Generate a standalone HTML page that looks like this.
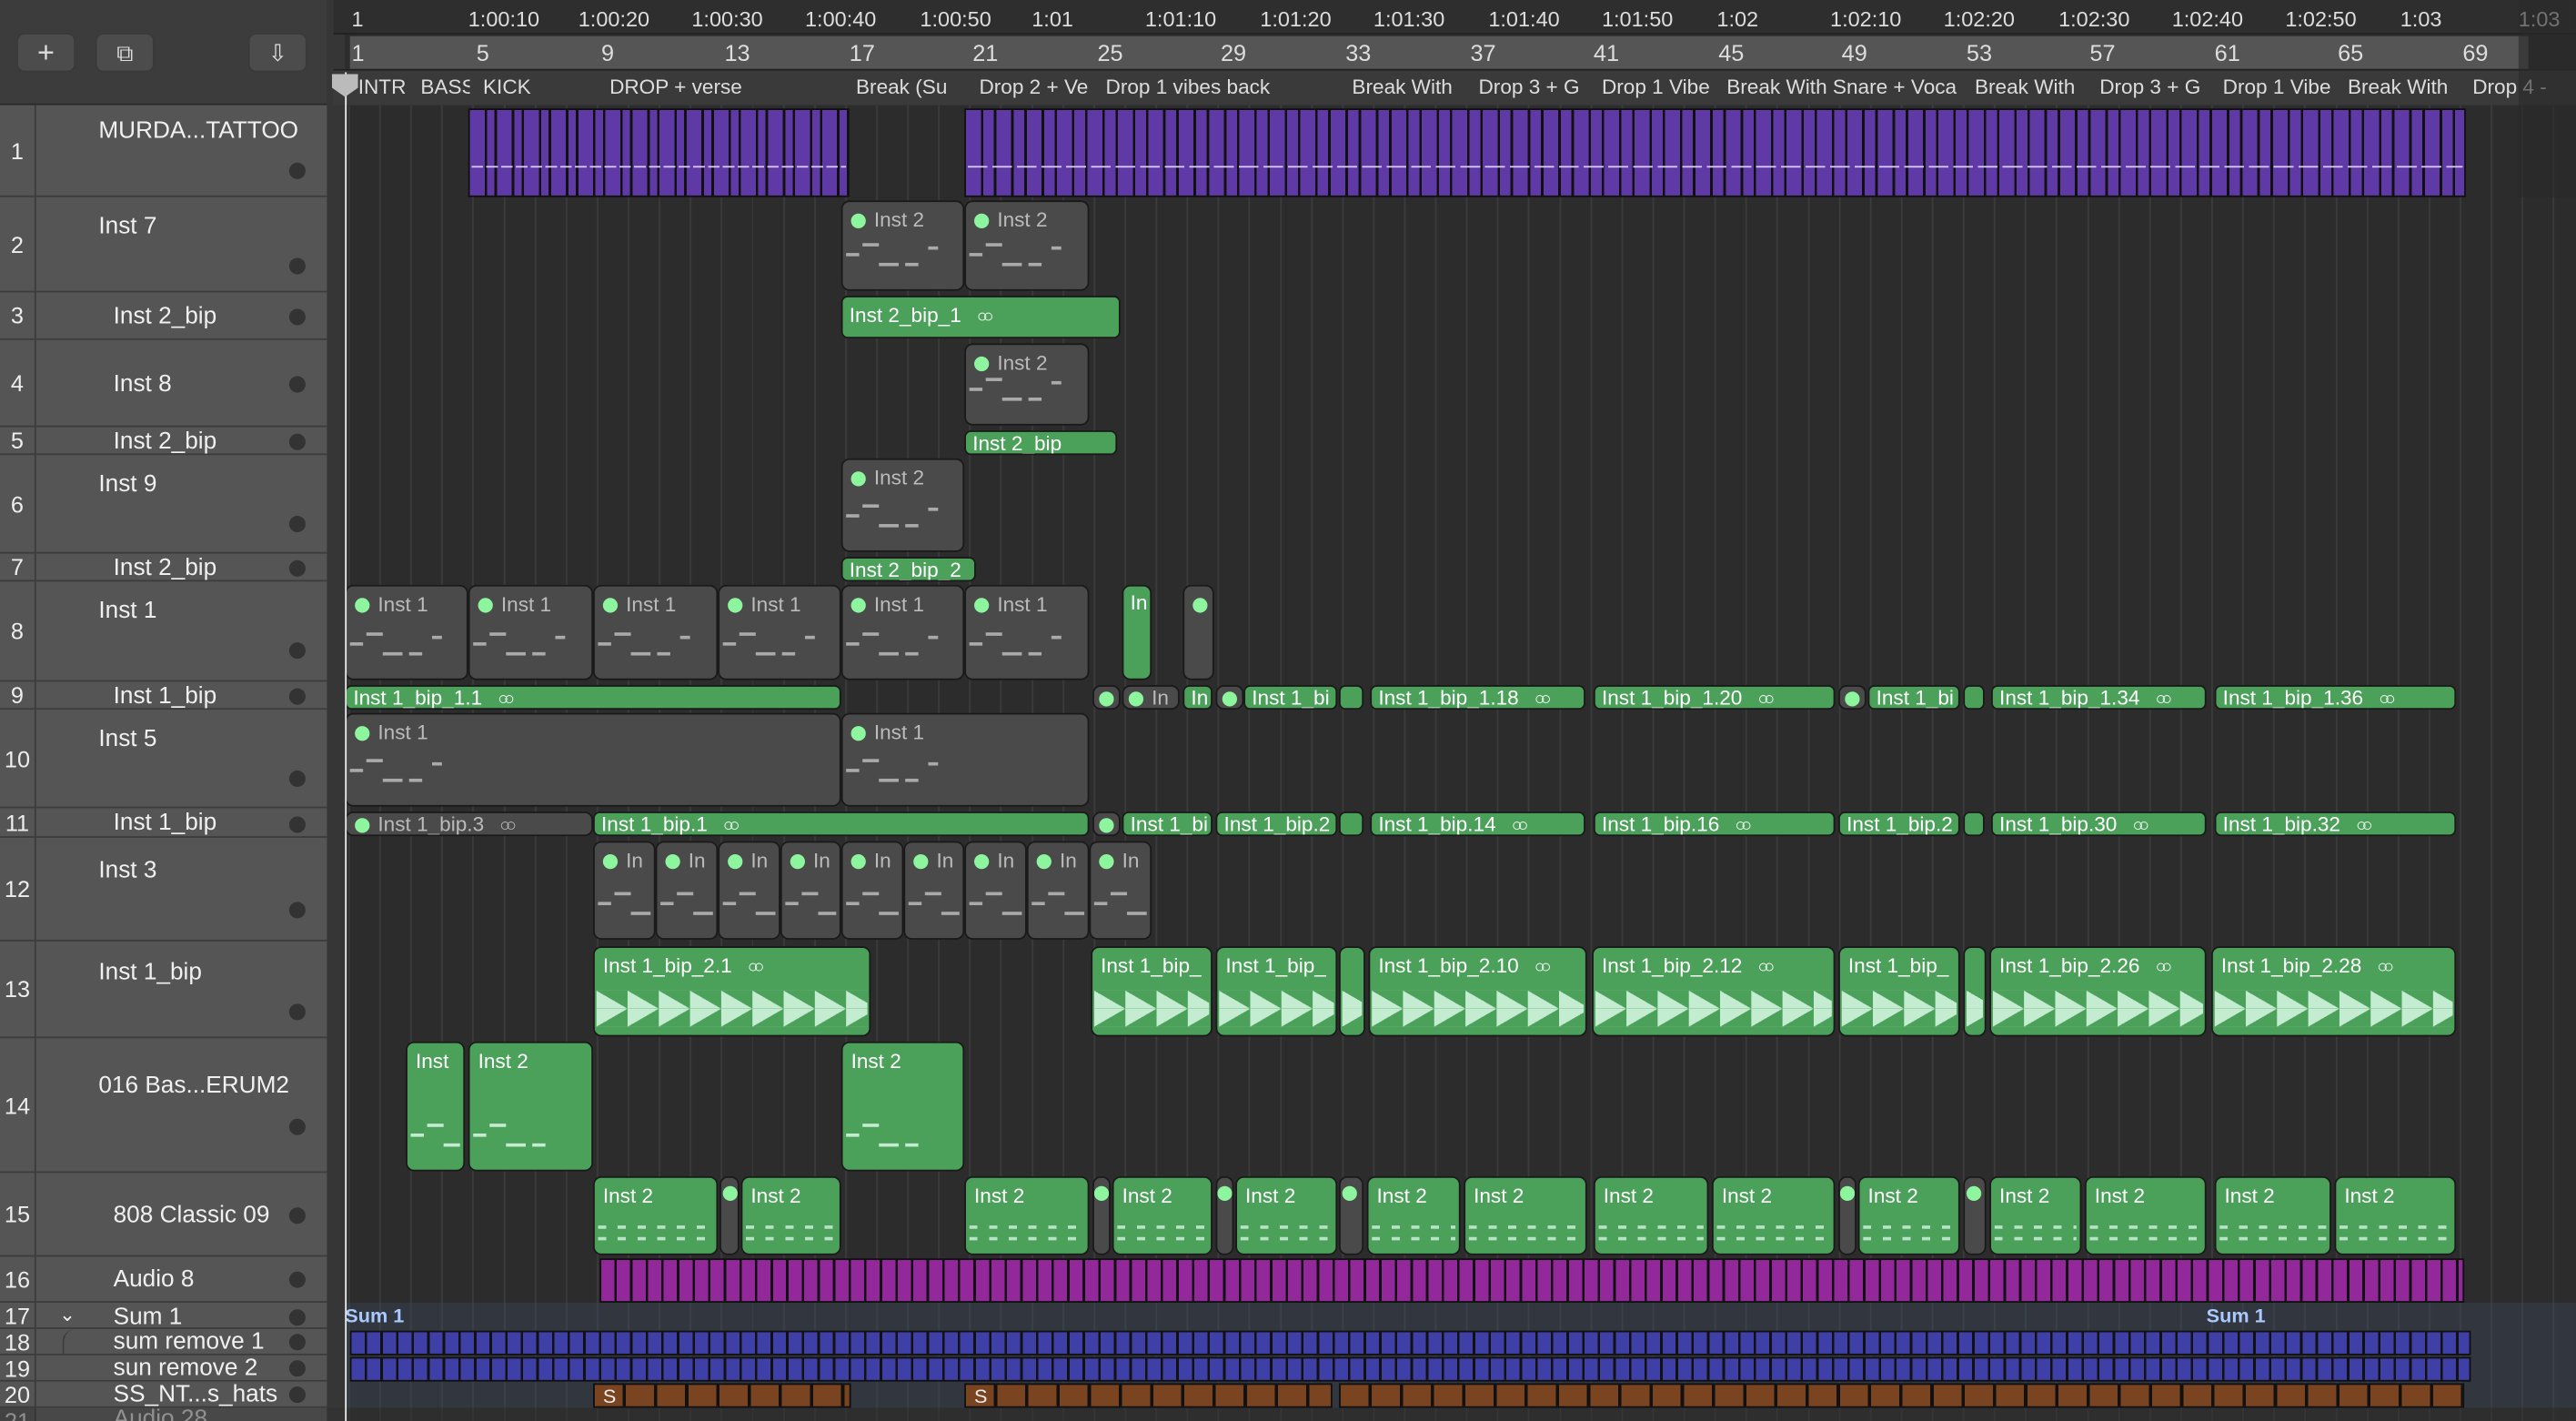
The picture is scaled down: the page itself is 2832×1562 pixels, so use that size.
<!DOCTYPE html>
<html><head><meta charset="utf-8"><style>
*{margin:0;padding:0;box-sizing:border-box}
html,body{width:2832px;height:1562px;overflow:hidden;background:#2c2c2c}
#w{position:absolute;left:0;top:0;width:1568px;height:865px;transform:scale(1.80612,1.8058);transform-origin:0 0;font-family:"Liberation Sans",sans-serif;color:#eee;overflow:hidden;background:#2c2c2c}
.a{position:absolute}
.tl{position:absolute;left:22px;width:177px;background:#555;border-bottom:1px solid #3c3c3c}
.tn{position:absolute;left:0;width:22px;background:#555;border-bottom:1px solid #3c3c3c;border-right:1px solid #3c3c3c;font-size:14px;text-align:center;color:#eee}
.nm{position:absolute;font-size:14.5px;color:#f0f0f0;white-space:nowrap}
.dot{position:absolute;left:176px;width:10px;height:10px;border-radius:50%;background:#333}
.g{position:absolute;background:#4ba05a;border:1px solid #1a1a1a;border-radius:4px;font-size:12.5px;color:#fff;padding-left:4px;white-space:nowrap;overflow:hidden;line-height:14px}
.m{position:absolute;background:#4a4a4a;border:1px solid #1a1a1a;border-radius:5px;font-size:12.5px;color:#bbb;white-space:nowrap;overflow:hidden;padding:4px 0 0 5px}
.m::before{content:"";display:inline-block;width:9px;height:9px;border-radius:50%;background:#8ef59f;margin-right:5px;vertical-align:-1px}
.m.e::before{display:none}
.mg{position:absolute;background:#4ba05a;border:1px solid #1a1a1a;border-radius:5px;font-size:12.5px;color:#fff;white-space:nowrap;overflow:hidden;padding:4px 0 0 5px}
.rl{position:absolute;font-size:13px;color:#ddd;white-space:nowrap}
.mk{position:absolute;top:46px;font-size:12.5px;color:#ddd;white-space:nowrap}
.btn{position:absolute;top:20px;height:24px;width:36px;background:#4c4c4c;border:1px solid #3a3a3a;border-radius:5px;color:#ddd;text-align:center;font-size:18px;line-height:22px}
.lnk{font-size:11px;margin-left:6px;letter-spacing:-3px}
.notes{position:absolute;left:2px;right:2px;bottom:8px;height:26px;background-image:linear-gradient(#aaa,#aaa),linear-gradient(#aaa,#aaa),linear-gradient(#aaa,#aaa),linear-gradient(#aaa,#aaa),linear-gradient(#aaa,#aaa);background-size:8px 2px,10px 2px,12px 2px,8px 2px,6px 2px;background-position:0 12px,10px 6px,20px 18px,36px 18px,50px 8px;background-repeat:no-repeat}
.mg .notes{background-image:linear-gradient(#c3ecd0,#c3ecd0),linear-gradient(#c3ecd0,#c3ecd0),linear-gradient(#c3ecd0,#c3ecd0),linear-gradient(#c3ecd0,#c3ecd0)}
.wv{position:absolute;left:1px;right:1px;top:26px;height:22px;background:linear-gradient(to top right,#c3ecd0 50%,transparent 50%) 0 0/19px 11px repeat-x,linear-gradient(to bottom right,#c3ecd0 50%,transparent 50%) 0 11px/19px 11px repeat-x}
.nt{position:absolute;left:2px;right:2px;bottom:6px;height:14px;background:linear-gradient(#c3ecd0,#c3ecd0) 0 2px/5px 2px,linear-gradient(#c3ecd0,#c3ecd0) 0 8px/5px 2px;background-repeat:repeat-x;background-size:5px 2px;background-position:3px 3px,8px 10px;opacity:.9;-webkit-mask:repeating-linear-gradient(to right,#000 0 5px,transparent 5px 12px)}
</style></head><body><div id="w">
<div class="a" style="left:210px;top:64px;width:1358px;height:801px;background-image:repeating-linear-gradient(to right,#3b3b3b 0 1px,transparent 1px 18.9px);background-position:2px 0"></div>
<div class="a" style="left:0;top:0;width:200px;height:64px;background:#3c3c3c;border-bottom:1px solid #2a2a2a"></div>
<div class="btn" style="left:10px">+</div>
<div class="btn" style="left:58px;font-size:14px">⧉</div>
<div class="btn" style="left:151px;font-size:14px">⇩</div>
<div class="a" style="left:199px;top:0;width:11px;height:865px;background:#363636"></div>
<div class="a" style="left:203px;top:0;width:1365px;height:21px;background:#2e2e2e;border-bottom:1px solid #222"></div>
<div class="a" style="left:213px;top:22px;width:1326px;height:20px;background:#555"></div>
<div class="a" style="left:203px;top:42px;width:1365px;height:22px;background:#3a3a3a;border-top:1px solid #222"></div>
<div class="rl" style="left:214px;top:4px">1</div><div class="rl" style="left:285px;top:4px">1:00:10</div><div class="rl" style="left:352px;top:4px">1:00:20</div><div class="rl" style="left:421px;top:4px">1:00:30</div><div class="rl" style="left:490px;top:4px">1:00:40</div><div class="rl" style="left:560px;top:4px">1:00:50</div><div class="rl" style="left:628px;top:4px">1:01</div><div class="rl" style="left:697px;top:4px">1:01:10</div><div class="rl" style="left:767px;top:4px">1:01:20</div><div class="rl" style="left:836px;top:4px">1:01:30</div><div class="rl" style="left:906px;top:4px">1:01:40</div><div class="rl" style="left:975px;top:4px">1:01:50</div><div class="rl" style="left:1045px;top:4px">1:02</div><div class="rl" style="left:1114px;top:4px">1:02:10</div><div class="rl" style="left:1183px;top:4px">1:02:20</div><div class="rl" style="left:1253px;top:4px">1:02:30</div><div class="rl" style="left:1322px;top:4px">1:02:40</div><div class="rl" style="left:1391px;top:4px">1:02:50</div><div class="rl" style="left:1461px;top:4px">1:03</div><div class="rl" style="left:1533px;top:4px">1:03</div>
<div class="rl" style="left:214px;top:24px;font-size:14px">1</div><div class="rl" style="left:290px;top:24px;font-size:14px">5</div><div class="rl" style="left:366px;top:24px;font-size:14px">9</div><div class="rl" style="left:441px;top:24px;font-size:14px">13</div><div class="rl" style="left:517px;top:24px;font-size:14px">17</div><div class="rl" style="left:592px;top:24px;font-size:14px">21</div><div class="rl" style="left:668px;top:24px;font-size:14px">25</div><div class="rl" style="left:743px;top:24px;font-size:14px">29</div><div class="rl" style="left:819px;top:24px;font-size:14px">33</div><div class="rl" style="left:895px;top:24px;font-size:14px">37</div><div class="rl" style="left:970px;top:24px;font-size:14px">41</div><div class="rl" style="left:1046px;top:24px;font-size:14px">45</div><div class="rl" style="left:1121px;top:24px;font-size:14px">49</div><div class="rl" style="left:1197px;top:24px;font-size:14px">53</div><div class="rl" style="left:1272px;top:24px;font-size:14px">57</div><div class="rl" style="left:1348px;top:24px;font-size:14px">61</div><div class="rl" style="left:1423px;top:24px;font-size:14px">65</div><div class="rl" style="left:1499px;top:24px;font-size:14px">69</div>
<div class="mk" style="left:218px">INTR</div><div class="mk" style="left:256px;width:30px;overflow:hidden">BASS</div><div class="mk" style="left:294px">KICK</div><div class="mk" style="left:371px">DROP + verse</div><div class="mk" style="left:521px;width:60px;overflow:hidden">Break (Su</div><div class="mk" style="left:596px;width:70px;overflow:hidden">Drop 2 + Ve</div><div class="mk" style="left:673px">Drop 1 vibes back</div><div class="mk" style="left:823px">Break With</div><div class="mk" style="left:900px;width:66px;overflow:hidden">Drop 3 + G</div><div class="mk" style="left:975px;width:70px;overflow:hidden">Drop 1 Vibe</div><div class="mk" style="left:1051px;width:145px;overflow:hidden">Break With Snare + Voca</div><div class="mk" style="left:1202px">Break With</div><div class="mk" style="left:1278px;width:66px;overflow:hidden">Drop 3 + G</div><div class="mk" style="left:1353px;width:70px;overflow:hidden">Drop 1 Vibe</div><div class="mk" style="left:1429px">Break With</div><div class="mk" style="left:1505px">Drop 4 -</div>
<div class="a" style="left:1533px;top:0;width:35px;height:120px;background:#2a2a2a;opacity:.6"></div>

<div class="tn" style="top:64px;height:56px;line-height:56px">1</div><div class="tl" style="top:64px;height:56px"></div><div class="nm" style="left:60px;top:72px">MURDA...TATTOO</div><div class="dot" style="top:99px"></div>
<div class="tn" style="top:120px;height:58px;line-height:58px">2</div><div class="tl" style="top:120px;height:58px"></div><div class="nm" style="left:60px;top:130px">Inst 7</div><div class="dot" style="top:157px"></div>
<div class="tn" style="top:178px;height:29px;line-height:29px">3</div><div class="tl" style="top:178px;height:29px"></div><div class="nm" style="left:69px;top:185px">Inst 2_bip</div><div class="dot" style="top:188px"></div>
<div class="tn" style="top:207px;height:53px;line-height:53px">4</div><div class="tl" style="top:207px;height:53px"></div><div class="nm" style="left:69px;top:226px">Inst 8</div><div class="dot" style="top:229px"></div>
<div class="tn" style="top:260px;height:17px;line-height:17px">5</div><div class="tl" style="top:260px;height:17px;overflow:hidden"></div><div class="nm" style="left:69px;top:261px">Inst 2_bip</div><div class="dot" style="top:264px"></div>
<div class="tn" style="top:277px;height:60px;line-height:60px">6</div><div class="tl" style="top:277px;height:60px"></div><div class="nm" style="left:60px;top:287px">Inst 9</div><div class="dot" style="top:314px"></div>
<div class="tn" style="top:337px;height:17px;line-height:17px">7</div><div class="tl" style="top:337px;height:17px"></div><div class="nm" style="left:69px;top:338px">Inst 2_bip</div><div class="dot" style="top:341px"></div>
<div class="tn" style="top:354px;height:61px;line-height:61px">8</div><div class="tl" style="top:354px;height:61px"></div><div class="nm" style="left:60px;top:364px">Inst 1</div><div class="dot" style="top:391px"></div>
<div class="tn" style="top:415px;height:17px;line-height:17px">9</div><div class="tl" style="top:415px;height:17px"></div><div class="nm" style="left:69px;top:416px">Inst 1_bip</div><div class="dot" style="top:419px"></div>
<div class="tn" style="top:432px;height:60px;line-height:60px">10</div><div class="tl" style="top:432px;height:60px"></div><div class="nm" style="left:60px;top:442px">Inst 5</div><div class="dot" style="top:469px"></div>
<div class="tn" style="top:492px;height:18px;line-height:18px">11</div><div class="tl" style="top:492px;height:18px"></div><div class="nm" style="left:69px;top:493px">Inst 1_bip</div><div class="dot" style="top:497px"></div>
<div class="tn" style="top:510px;height:63px;line-height:63px">12</div><div class="tl" style="top:510px;height:63px"></div><div class="nm" style="left:60px;top:522px">Inst 3</div><div class="dot" style="top:549px"></div>
<div class="tn" style="top:573px;height:59px;line-height:59px">13</div><div class="tl" style="top:573px;height:59px"></div><div class="nm" style="left:60px;top:584px">Inst 1_bip</div><div class="dot" style="top:611px"></div>
<div class="tn" style="top:632px;height:82px;line-height:82px">14</div><div class="tl" style="top:632px;height:82px"></div><div class="nm" style="left:60px;top:653px">016 Bas...ERUM2</div><div class="dot" style="top:681px"></div>
<div class="tn" style="top:714px;height:51px;line-height:51px">15</div><div class="tl" style="top:714px;height:51px"></div><div class="nm" style="left:69px;top:732px">808 Classic 09</div><div class="dot" style="top:735px"></div>
<div class="tn" style="top:765px;height:28px;line-height:28px">16</div><div class="tl" style="top:765px;height:28px"></div><div class="nm" style="left:69px;top:771px">Audio 8</div><div class="dot" style="top:774px"></div>
<div class="tn" style="top:793px;height:16px;line-height:16px">17</div><div class="tl" style="top:793px;height:16px"></div><div class="nm" style="left:36px;top:793px;font-size:12px">⌄</div><div class="nm" style="left:69px;top:794px">Sum 1</div><div class="dot" style="top:797px"></div>
<div class="tn" style="top:809px;height:16px;line-height:16px">18</div><div class="tl" style="top:809px;height:16px"></div><div class="a" style="left:38px;top:809px;width:162px;height:32px;border-left:1px solid #3c3c3c;border-top-left-radius:8px"></div><div class="nm" style="left:69px;top:809px">sum remove 1</div><div class="dot" style="top:812px"></div>
<div class="tn" style="top:825px;height:16px;line-height:16px">19</div><div class="tl" style="top:825px;height:16px"></div><div class="nm" style="left:69px;top:825px">sun remove 2</div><div class="dot" style="top:828px"></div>
<div class="tn" style="top:841px;height:16px;line-height:16px">20</div><div class="tl" style="top:841px;height:16px"></div><div class="nm" style="left:69px;top:841px">SS_NT...s_hats</div><div class="dot" style="top:844px"></div>
<div class="tn" style="top:857px;height:16px;line-height:16px">21</div><div class="tl" style="top:857px;height:16px;background:#606060"></div><div class="nm" style="left:69px;top:856px">Audio 28</div>

<div class="a" style="left:210px;top:793px;width:1358px;height:64px;background:rgba(60,75,100,.35)"></div>
<div class="a" style="left:210px;top:794px;font-size:12px;color:#a9c9ff;font-weight:bold">Sum 1</div>
<div class="a" style="left:1343px;top:794px;font-size:12px;color:#a9c9ff;font-weight:bold">Sum 1</div>

<div class="a" style="left:285px;top:66px;width:232px;height:54px;background:repeating-linear-gradient(to right,#5f3aa6 0 9px,#111 9px 10.5px,#5f3aa6 10.5px 15px,#111 15px 16.5px);border:1px solid #111"></div>
<div class="a" style="left:587px;top:66px;width:914px;height:54px;background:repeating-linear-gradient(to right,#5f3aa6 0 9px,#111 9px 10.5px,#5f3aa6 10.5px 17px,#111 17px 18.5px);border:1px solid #111"></div>
<div class="a" style="left:287px;top:101px;width:228px;height:1px;background:repeating-linear-gradient(to right,#d8c8ff 0 7px,transparent 7px 9px)"></div>
<div class="a" style="left:589px;top:101px;width:910px;height:1px;background:repeating-linear-gradient(to right,#d8c8ff 0 12px,transparent 12px 15px)"></div>

<div class="m" style="left:512px;top:122px;width:75px;height:55px">Inst 2<div class="notes"></div></div>
<div class="m" style="left:587px;top:122px;width:76px;height:55px">Inst 2<div class="notes"></div></div>
<div class="g" style="left:512px;top:180px;width:170px;height:26px;padding-top:4px">Inst 2_bip_1 <span class="lnk">○○</span></div>
<div class="m" style="left:587px;top:209px;width:76px;height:50px">Inst 2<div class="notes"></div></div>
<div class="g" style="left:587px;top:262px;width:93px;height:15px">Inst 2_bip</div>
<div class="m" style="left:512px;top:279px;width:75px;height:57px">Inst 2<div class="notes"></div></div>
<div class="g" style="left:512px;top:339px;width:82px;height:15px">Inst 2_bip_2</div>

<div class="m" style="left:210px;top:356px;width:75px;height:58px">Inst 1<div class="notes"></div></div>
<div class="m" style="left:285px;top:356px;width:76px;height:58px">Inst 1<div class="notes"></div></div>
<div class="m" style="left:361px;top:356px;width:76px;height:58px">Inst 1<div class="notes"></div></div>
<div class="m" style="left:437px;top:356px;width:75px;height:58px">Inst 1<div class="notes"></div></div>
<div class="m" style="left:512px;top:356px;width:75px;height:58px">Inst 1<div class="notes"></div></div>
<div class="m" style="left:587px;top:356px;width:76px;height:58px">Inst 1<div class="notes"></div></div>
<div class="g" style="left:683px;top:356px;width:18px;height:58px;padding-top:3px;border-radius:5px">In</div>
<div class="m" style="left:720px;top:356px;width:19px;height:58px"></div>

<div class="g" style="left:210px;top:417px;width:302px;height:15px">Inst 1_bip_1.1 <span class="lnk">○○</span></div>
<div class="m" style="left:665px;top:417px;width:17px;height:15px;padding:2px 0 0 3px;line-height:11px"></div>
<div class="m" style="left:683px;top:417px;width:35px;height:15px;padding:2px 0 0 3px;line-height:11px">In</div>
<div class="g" style="left:720px;top:417px;width:18px;height:15px">In</div>
<div class="m" style="left:740px;top:417px;width:17px;height:15px;padding:2px 0 0 3px;line-height:11px"></div>
<div class="g" style="left:757px;top:417px;width:57px;height:15px">Inst 1_bi</div>
<div class="g" style="left:815px;top:417px;width:15px;height:15px"></div>
<div class="g" style="left:834px;top:417px;width:131px;height:15px">Inst 1_bip_1.18 <span class="lnk">○○</span></div>
<div class="g" style="left:970px;top:417px;width:147px;height:15px">Inst 1_bip_1.20 <span class="lnk">○○</span></div>
<div class="m" style="left:1119px;top:417px;width:17px;height:15px;padding:2px 0 0 3px;line-height:11px"></div>
<div class="g" style="left:1137px;top:417px;width:56px;height:15px">Inst 1_bi</div>
<div class="g" style="left:1195px;top:417px;width:13px;height:15px"></div>
<div class="g" style="left:1212px;top:417px;width:131px;height:15px">Inst 1_bip_1.34 <span class="lnk">○○</span></div>
<div class="g" style="left:1348px;top:417px;width:147px;height:15px">Inst 1_bip_1.36 <span class="lnk">○○</span></div>

<div class="m" style="left:210px;top:434px;width:302px;height:57px">Inst 1<div class="notes"></div></div>
<div class="m" style="left:512px;top:434px;width:151px;height:57px">Inst 1<div class="notes"></div></div>

<div class="m" style="left:210px;top:494px;width:151px;height:15px;padding:1px 0 0 5px;line-height:13px">Inst 1_bip.3 <span class="lnk">○○</span></div>
<div class="g" style="left:361px;top:494px;width:302px;height:15px">Inst 1_bip.1 <span class="lnk">○○</span></div>
<div class="m" style="left:665px;top:494px;width:17px;height:15px;padding:2px 0 0 3px;line-height:11px"></div>
<div class="g" style="left:683px;top:494px;width:55px;height:15px">Inst 1_bi</div>
<div class="g" style="left:740px;top:494px;width:74px;height:15px">Inst 1_bip.2</div>
<div class="g" style="left:815px;top:494px;width:15px;height:15px"></div>
<div class="g" style="left:834px;top:494px;width:131px;height:15px">Inst 1_bip.14 <span class="lnk">○○</span></div>
<div class="g" style="left:970px;top:494px;width:147px;height:15px">Inst 1_bip.16 <span class="lnk">○○</span></div>
<div class="g" style="left:1119px;top:494px;width:74px;height:15px">Inst 1_bip.2</div>
<div class="g" style="left:1195px;top:494px;width:13px;height:15px"></div>
<div class="g" style="left:1212px;top:494px;width:131px;height:15px">Inst 1_bip.30 <span class="lnk">○○</span></div>
<div class="g" style="left:1348px;top:494px;width:147px;height:15px">Inst 1_bip.32 <span class="lnk">○○</span></div>

<div class="m" style="left:361px;top:512px;width:38px;height:60px">In<div class="notes"></div></div>
<div class="m" style="left:399px;top:512px;width:38px;height:60px">In<div class="notes"></div></div>
<div class="m" style="left:437px;top:512px;width:38px;height:60px">In<div class="notes"></div></div>
<div class="m" style="left:475px;top:512px;width:37px;height:60px">In<div class="notes"></div></div>
<div class="m" style="left:512px;top:512px;width:38px;height:60px">In<div class="notes"></div></div>
<div class="m" style="left:550px;top:512px;width:37px;height:60px">In<div class="notes"></div></div>
<div class="m" style="left:587px;top:512px;width:38px;height:60px">In<div class="notes"></div></div>
<div class="m" style="left:625px;top:512px;width:38px;height:60px">In<div class="notes"></div></div>
<div class="m" style="left:663px;top:512px;width:38px;height:60px">In<div class="notes"></div></div>

<div class="mg" style="left:361px;top:576px;width:169px;height:55px">Inst 1_bip_2.1 <span class="lnk">○○</span><div class="wv"></div></div>
<div class="mg" style="left:664px;top:576px;width:74px;height:55px">Inst 1_bip_<div class="wv"></div></div>
<div class="mg" style="left:740px;top:576px;width:74px;height:55px">Inst 1_bip_<div class="wv"></div></div>
<div class="mg" style="left:815px;top:576px;width:16px;height:55px"><div class="wv"></div></div>
<div class="mg" style="left:833px;top:576px;width:133px;height:55px">Inst 1_bip_2.10 <span class="lnk">○○</span><div class="wv"></div></div>
<div class="mg" style="left:969px;top:576px;width:148px;height:55px">Inst 1_bip_2.12 <span class="lnk">○○</span><div class="wv"></div></div>
<div class="mg" style="left:1119px;top:576px;width:74px;height:55px">Inst 1_bip_<div class="wv"></div></div>
<div class="mg" style="left:1195px;top:576px;width:14px;height:55px"><div class="wv"></div></div>
<div class="mg" style="left:1211px;top:576px;width:132px;height:55px">Inst 1_bip_2.26 <span class="lnk">○○</span><div class="wv"></div></div>
<div class="mg" style="left:1346px;top:576px;width:149px;height:55px">Inst 1_bip_2.28 <span class="lnk">○○</span><div class="wv"></div></div>

<div class="mg" style="left:247px;top:634px;width:36px;height:79px">Inst<div class="notes"></div></div>
<div class="mg" style="left:285px;top:634px;width:76px;height:79px">Inst 2<div class="notes"></div></div>
<div class="mg" style="left:512px;top:634px;width:75px;height:79px">Inst 2<div class="notes"></div></div>

<div class="mg" style="left:361px;top:716px;width:76px;height:48px">Inst 2<div class="nt"></div></div>
<div class="m" style="left:438px;top:716px;width:12px;height:48px;padding:2px 0 0 1px"></div>
<div class="mg" style="left:451px;top:716px;width:61px;height:48px">Inst 2<div class="nt"></div></div>
<div class="mg" style="left:587px;top:716px;width:76px;height:48px">Inst 2<div class="nt"></div></div>
<div class="m" style="left:665px;top:716px;width:11px;height:48px;padding:2px 0 0 0"></div>
<div class="mg" style="left:677px;top:716px;width:61px;height:48px">Inst 2<div class="nt"></div></div>
<div class="m" style="left:740px;top:716px;width:11px;height:48px;padding:2px 0 0 0"></div>
<div class="mg" style="left:752px;top:716px;width:62px;height:48px">Inst 2<div class="nt"></div></div>
<div class="m" style="left:815px;top:716px;width:15px;height:48px;padding:2px 0 0 1px"></div>
<div class="mg" style="left:832px;top:716px;width:57px;height:48px">Inst 2<div class="nt"></div></div>
<div class="mg" style="left:891px;top:716px;width:75px;height:48px">Inst 2<div class="nt"></div></div>
<div class="mg" style="left:970px;top:716px;width:70px;height:48px">Inst 2<div class="nt"></div></div>
<div class="mg" style="left:1042px;top:716px;width:75px;height:48px">Inst 2<div class="nt"></div></div>
<div class="m" style="left:1119px;top:716px;width:11px;height:48px;padding:2px 0 0 0"></div>
<div class="mg" style="left:1131px;top:716px;width:62px;height:48px">Inst 2<div class="nt"></div></div>
<div class="m" style="left:1195px;top:716px;width:14px;height:48px;padding:2px 0 0 1px"></div>
<div class="mg" style="left:1211px;top:716px;width:56px;height:48px">Inst 2<div class="nt"></div></div>
<div class="mg" style="left:1269px;top:716px;width:74px;height:48px">Inst 2<div class="nt"></div></div>
<div class="mg" style="left:1348px;top:716px;width:71px;height:48px">Inst 2<div class="nt"></div></div>
<div class="mg" style="left:1421px;top:716px;width:74px;height:48px">Inst 2<div class="nt"></div></div>

<div class="a" style="left:365px;top:766px;width:1135px;height:27px;background:repeating-linear-gradient(to right,#93289b 0 8px,#111 8px 9.5px,#93289b 9.5px 17.5px,#111 17.5px 19px);border:1px solid #111"></div>

<div class="a" style="left:213px;top:810px;width:1291px;height:15px;background:repeating-linear-gradient(to right,#3f3fa8 0 8px,#111 8px 9.5px,#3f3fa8 9.5px 17.5px,#111 17.5px 19px);border:1px solid #111"></div>
<div class="a" style="left:213px;top:826px;width:1291px;height:15px;background:repeating-linear-gradient(to right,#3f3fa8 0 8px,#111 8px 9.5px,#3f3fa8 9.5px 17.5px,#111 17.5px 19px);border:1px solid #111"></div>

<div class="a" style="left:361px;top:842px;width:157px;height:15px;background:repeating-linear-gradient(to right,#7a4420 0 17px,#111 17px 19px,#7a4420 19px 36px,#111 36px 38px);border:1px solid #111;font-size:12px;color:#eee;padding-left:5px">S</div>
<div class="a" style="left:587px;top:842px;width:224px;height:15px;background:repeating-linear-gradient(to right,#7a4420 0 17px,#111 17px 19px,#7a4420 19px 36px,#111 36px 38px);border:1px solid #111;font-size:12px;color:#eee;padding-left:5px">S</div>
<div class="a" style="left:815px;top:842px;width:685px;height:15px;background:repeating-linear-gradient(to right,#7a4420 0 17px,#111 17px 19px,#7a4420 19px 36px,#111 36px 38px);border:1px solid #111"></div>
<div class="a" style="left:0;top:857px;width:1568px;height:8px;background:#2f2f2f;opacity:.5"></div>

<div class="a" style="left:210px;top:44px;width:1px;height:821px;background:#eee"></div>
<div class="a" style="left:202px;top:45px;width:16px;height:14px;background:#bbb;clip-path:polygon(0 0,100% 0,100% 60%,50% 100%,0 60%)"></div>
</div></body></html>
